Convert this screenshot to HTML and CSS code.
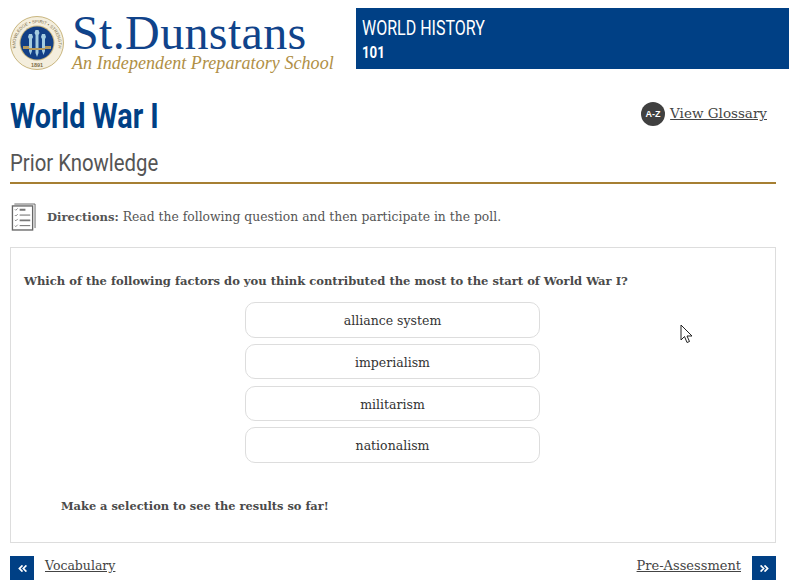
FILE: index.html
```html
<!DOCTYPE html>
<html lang="en">
<head>
<meta charset="utf-8">
<title>World War I</title>
<link rel="stylesheet" href="styles.css">
</head>
<body>
<header class="top">
  <div class="logo">
    <svg class="seal" width="54" height="56" viewBox="0 0 54 56">
      <defs><path id="ring" d="M6.500 36a21.500 21.500 0 1 1 41 0"/></defs>
      <circle cx="27" cy="28" r="26.500" fill="#f4eedd" stroke="#c9b67f"/>
      <circle cx="27" cy="28" r="17.500" fill="#c9b67f"/>
      <circle cx="27" cy="28" r="16.500" fill="#123f86"/>
      <g fill="#a4cce0">
        <path d="M19 19h3l1 3-1 2 0 12-1.500 4-1.500-4 0-12-1-2z"/>
        <path d="M25.500 15h3l1 3-1 2 0 18-1.500 4-1.500-4 0-18-1-2z"/>
        <path d="M32 19h3l1 3-1 2 0 12-1.500 4-1.500-4 0-12-1-2z"/>
      </g>
      <path d="M13 31h6v3h-6zM19 33h16v2h-16zM35 31h6v3h-6z" fill="#b59a5e"/>
      <g fill="#7d6f4a" font-family="Liberation Sans, sans-serif" font-size="4.400">
        <text x="27" y="52" text-anchor="middle" font-size="5.500" font-weight="700">1891</text>
        <text><textPath href="#ring" startOffset="50%" text-anchor="middle">KNOWLEDGE • SPIRIT • STRENGTH</textPath></text>
      </g>
    </svg>
    <div class="wordmark">
      <div class="name">St.Dunstans</div>
      <div class="tag">An Independent Preparatory School</div>
    </div>
  </div>
  <div class="course">
    <div class="course-name"><span class="cond">WORLD HISTORY</span></div>
    <div class="course-num"><span class="cond">101</span></div>
  </div>
</header>
<main class="page">
  <div class="title-row">
    <h1 class="title"><span class="cond">World War I</span></h1>
    <a class="glossary" href="#"><span class="az">A-Z</span><span class="link">View Glossary</span></a>
  </div>
  <h2 class="sub"><span class="cond">Prior Knowledge</span></h2>
  <div class="directions">
    <svg class="list-icon" width="25" height="30" viewBox="0 0 26 30" fill="none" stroke="#666">
      <path d="M3.500 1.500h21.500v25" stroke-width="1"/>
      <rect x="1.500" y="3.500" width="21" height="25" fill="#fff" stroke-width="1.400"/>
      <path d="M4 7l1 1 2-2M4 13l1 1 2-2M4 18l1 1 2-2M4 24l1 1 2-2" stroke-width=".8"/>
      <path d="M9 13h11M9 24h11" stroke-width="1"/>
      <path d="M9 7.500h6M9 18.500h11" stroke-width="2" stroke="#777"/>
    </svg>
    <p class="dir-text"><b class="dir-label">Directions:</b> Read the following question and then participate in the poll.</p>
  </div>
  <section class="card">
    <p class="question">Which of the following factors do you think contributed the most to the start of World War I?</p>
    <div class="options">
      <div class="opt">alliance system</div>
      <div class="opt">imperialism</div>
      <div class="opt">militarism</div>
      <div class="opt">nationalism</div>
    </div>
    <p class="hint">Make a selection to see the results so far!</p>
    <svg class="cursor" width="14" height="20" viewBox="0 0 14 20"><path d="M1 1v15l3.500-3.500 2.500 6 2.500-1-2.500-5.500h5z" fill="#fff" stroke="#222"/></svg>
  </section>
  <nav class="foot">
    <a class="nav-link" href="#"><span class="sq"><svg width="9" height="7" viewBox="0 0 10 8" fill="none" stroke="#fff" stroke-width="2"><path d="M5 .5L1.500 4 5 7.500M9.500 .5L6 4l3.500 3.500"/></svg></span><span class="link link-prev">Vocabulary</span></a>
    <a class="nav-link" href="#"><span class="link link-next">Pre-Assessment</span><span class="sq"><svg width="9" height="7" viewBox="0 0 10 8" fill="none" stroke="#fff" stroke-width="2"><path d="M.5 .5L4 4 .5 7.500M5 .5L8.500 4 5 7.500"/></svg></span></a>
  </nav>
</main>
</body>
</html>
```
FILE: styles.css
```css
* { box-sizing: border-box; }
html, body { margin: 0; padding: 0; background: #fff; }
body {
  width: 797px;
  height: 588px;
  overflow: hidden;
  font-family: "DejaVu Serif", serif;
  color: #4a4a4a;
}
.cond {
  display: inline-block;
  transform: scaleX(.83);
  transform-origin: left center;
  white-space: nowrap;
}
.top {
  display: flex;
  justify-content: space-between;
  padding: 8px 8px 0 10px;
  height: 69px;
}
.logo { display: flex; gap: 8px; padding-top: 7px; }
.seal { flex: none; }
.wordmark { display: flex; flex-direction: column; }
.name {
  font-family: "Liberation Serif", serif;
  font-size: 48px;
  line-height: 36px;
  letter-spacing: 0.36px;
  color: #10438a;
}
.tag {
  margin-top: 2px;
  font-family: "Liberation Serif", serif;
  font-style: italic;
  font-size: 18px;
  line-height: 20px;
  letter-spacing: 0.06px;
  color: #b08f45;
  white-space: nowrap;
}
.course {
  width: 433px;
  height: 61px;
  background: #004085;
  color: #fff;
  padding: 10px 6px;
  font-family: "Roboto", sans-serif;
}
.course-name { font-size: 19.3px; line-height: 22px; }
.course-num { font-size: 16px; line-height: 25px; font-weight: 700; }
.page { padding: 0 21px 0 10px; }
.title-row {
  display: flex;
  justify-content: space-between;
  align-items: flex-start;
  padding-top: 28px;
  height: 86px;
}
.title {
  margin: 0;
  font-family: "Roboto", sans-serif;
  font-size: 34.7px;
  line-height: 38px;
  font-weight: 700;
  color: #004085;
}
.glossary {
  display: flex;
  align-items: center;
  gap: 5px;
  margin: 5px 9px 0 0;
  text-decoration: none;
  color: #4a4a4a;
}
.az {
  width: 24px;
  height: 24px;
  border-radius: 50%;
  background: #404040;
  color: #fff;
  font: 700 9px/24px "Liberation Sans", sans-serif;
  text-align: center;
}
.link {
  text-decoration: underline;
  color: #444;
  line-height: 20px;
  margin-top: -4px;
}
.glossary .link { font-size: 13.5px; margin-top: -2px; }
.link-prev { font-size: 12.5px; }
.link-next { font-size: 13px; }
.sub {
  margin: 0;
  height: 29px;
  border-bottom: 2px solid #a67f32;
  font-family: "Roboto", sans-serif;
  font-size: 24.5px;
  line-height: 16px;
  font-weight: 400;
  color: #555;
}
.directions {
  display: flex;
  align-items: center;
  gap: 11px;
  height: 63px;
  padding: 2px 0 0 1px;
}
.list-icon { flex: none; }
.dir-text { margin: 0; font-size: 12.37px; color: #555; }
.dir-label { font-size: 11.6px; }
.card {
  position: relative;
  height: 296px;
  border: 1px solid #ddd;
  padding: 25px 13px 0;
}
.question {
  margin: 0 0 12px;
  height: 17px;
  font-size: 11.56px;
  line-height: 17px;
  font-weight: 700;
}
.options {
  display: flex;
  flex-direction: column;
  gap: 6.1px;
  width: 295px;
  margin: 0 auto 0 221px;
}
.opt {
  height: 35.7px;
  border: 1px solid #ddd;
  border-radius: 10px;
  text-align: center;
  font-size: 12.5px;
  line-height: 35px;
  color: #333;
}
.hint {
  margin: 36px 0 0 37px;
  font-size: 11.4px;
  font-weight: 700;
}
.cursor { position: absolute; left: 669px; top: 76px; }
.foot {
  display: flex;
  justify-content: space-between;
  padding-top: 13px;
}
.nav-link {
  display: flex;
  align-items: center;
  gap: 11px;
  text-decoration: none;
}
.sq {
  display: flex;
  align-items: center;
  justify-content: center;
  width: 24px;
  height: 24px;
  background: #004085;
}
```
